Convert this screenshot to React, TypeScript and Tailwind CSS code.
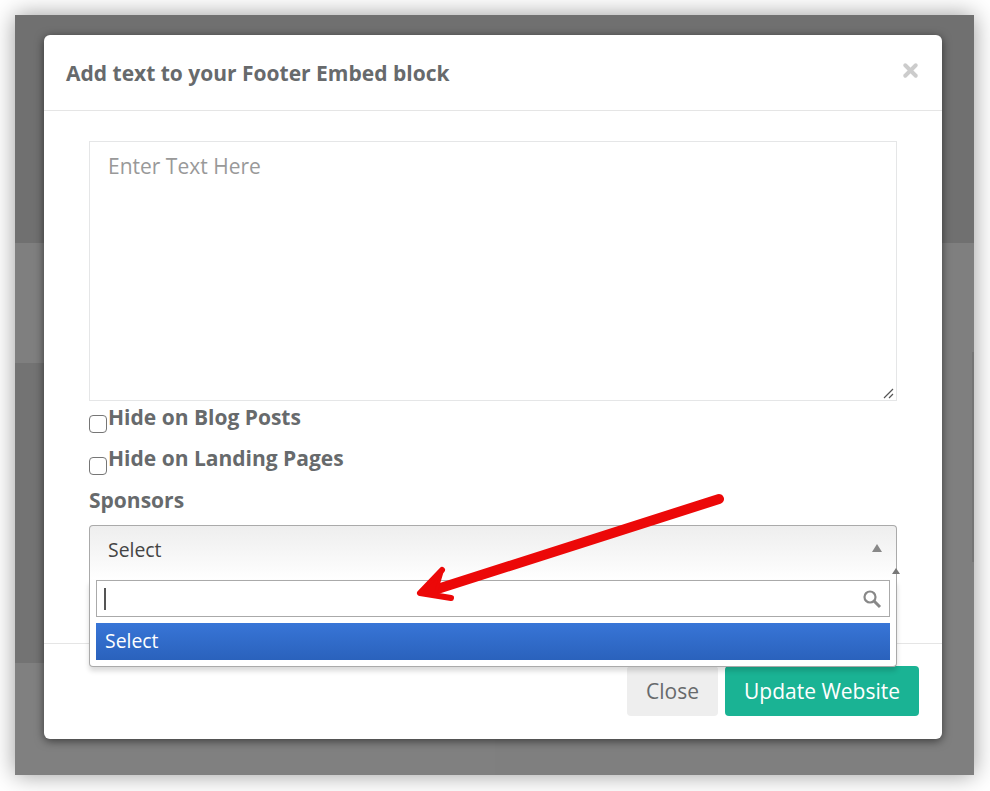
import { X } from "lucide-react";

const font = { fontFamily: '"Open Sans", sans-serif' };

const CheckRow = ({ label, boxTop }: { label: string; boxTop: string }) => (
  <div className="flex h-[41px] items-start">
    <span className={`${boxTop} h-[18px] w-[18px] rounded-[4px] border border-[#767676] bg-white`} />
    <span className="ml-[1px] -translate-y-px text-[21px] leading-[28px] font-bold text-[#676a6c]">{label}</span>
  </div>
);

const App = () => {
  return (
    <div className="h-[791px] w-[990px] overflow-hidden bg-white p-[15px]" style={font}>
      <div className="relative h-[760px] w-[959px] shadow-[0_0_22px_rgba(0,0,0,0.4)]">
        <div className="flex h-full">
          <div className="flex w-[480px] flex-col">
            <div className="h-[228px] bg-[#707070]" />
            <div className="h-[120px] bg-[#7f7f7f]" />
            <div className="h-[300px] bg-[#737373]" />
            <div className="flex-1 bg-[#808080]" />
          </div>
          <div className="flex flex-1 flex-col">
            <div className="h-[228px] bg-[#707070]" />
            <div className="flex flex-1 justify-end bg-[#7f7f7f]">
              <div className="mt-[109px] h-[210px] w-[2px] bg-[#747474]" />
            </div>
          </div>
        </div>

        <div className="absolute top-[20px] left-[29px] flex h-[704px] w-[898px] flex-col rounded-[6px] bg-white shadow-[0_2px_10px_rgba(0,0,0,0.55)]">
          <div className="flex h-[76px] shrink-0 items-center justify-between border-b border-[#e5e5e5] pr-[21px] pl-[22px]">
            <h4 className="mt-[2px] text-[21px] font-bold text-[#676a6c]">Add text to your Footer Embed block</h4>
            <X className="mb-[4px] h-[21px] w-[21px] text-[#cccccc]" strokeWidth={4.5} />
          </div>

          <div className="relative flex-1 px-[45px] pt-[30px]">
            <div className="relative h-[260px] w-full border border-[#e5e6e7] px-[18px] py-[10px] text-[21px] leading-[28px] text-[#999999]">
              Enter Text Here
              <svg className="absolute right-0 bottom-0 h-[14px] w-[14px]" viewBox="0 0 14 14" fill="none" stroke="#555555" strokeWidth="1.2">
                <path d="M2 12 11 3M7 12 11 8" />
              </svg>
            </div>

            <div className="pt-[3px]">
              <CheckRow label="Hide on Blog Posts" boxTop="mt-[11px]" />
              <CheckRow label="Hide on Landing Pages" boxTop="mt-[12px]" />
              <div className="text-[21px] leading-[28px] font-bold text-[#676a6c]">Sponsors</div>
            </div>

            <div className="relative mt-[11px]">
              <div className="flex h-[56px] items-start justify-between rounded-t-[4px] border border-b-0 border-[#aaaaaa] bg-gradient-to-b from-[#eeeeee] to-white pt-[10px] pr-[14px] pl-[18px]">
                <span className="text-[19.4px] leading-[28px] text-[#444444]">Select</span>
                <span className="mt-[8px] h-0 w-0 border-x-[5px] border-b-[8px] border-x-transparent border-b-[#888888]" />
              </div>
              <div className="absolute top-[55px] left-0 z-10 w-full rounded-b-[4px] border border-t-0 border-[#aaaaaa] bg-white px-[6px] pb-[6px] shadow-[0_4px_5px_rgba(0,0,0,0.15)]">
                <div className="flex h-[37px] items-center justify-between border border-[#aaaaaa] pr-[7px] pl-[7px]">
                  <span className="h-[22px] w-[1.5px] bg-[#555555]" />
                  <svg className="h-[20px] w-[20px]" viewBox="0 0 20 20" fill="none" stroke="#888888">
                    <circle cx="8" cy="8" r="5.5" strokeWidth="2.2" />
                    <path d="M12 12l6 6" strokeWidth="3" />
                  </svg>
                </div>
                <div className="mt-[6px] flex h-[37px] items-center bg-gradient-to-b from-[#3875d7] to-[#2a62bc] px-[9px] pb-[2px] text-[19.4px] text-white">
                  Select
                </div>
              </div>
              <span className="absolute top-[43px] right-[-3px] z-20 h-0 w-0 border-x-[4px] border-b-[6px] border-x-transparent border-b-[#777777]" />
            </div>
          </div>

          <div className="flex h-[96px] shrink-0 items-start justify-end gap-[7px] border-t border-[#e5e5e5] pt-[22px] pr-[23px]">
            <button className="h-[50px] w-[91px] rounded-[4px] bg-[#eeeeee] pt-[2px] text-[21px] text-[#676a6c]">Close</button>
            <button className="h-[50px] w-[194px] rounded-[4px] bg-[#1ab394] pt-[2px] text-[21px] text-white">Update Website</button>
          </div>
        </div>

        <svg className="absolute top-0 left-0 z-20 h-full w-full" viewBox="15 15 959 760" fill="none" stroke="#ec0808" strokeLinecap="round" strokeLinejoin="round">
          <path d="M719 499 428 592" strokeWidth="10" />
          <path d="M442 570 420 593 451 598" strokeWidth="6" />
          <path d="M442 572 419 593 436 592Z" fill="#ec0808" strokeWidth="3" />
        </svg>
      </div>
    </div>
  );
};

export default App;
